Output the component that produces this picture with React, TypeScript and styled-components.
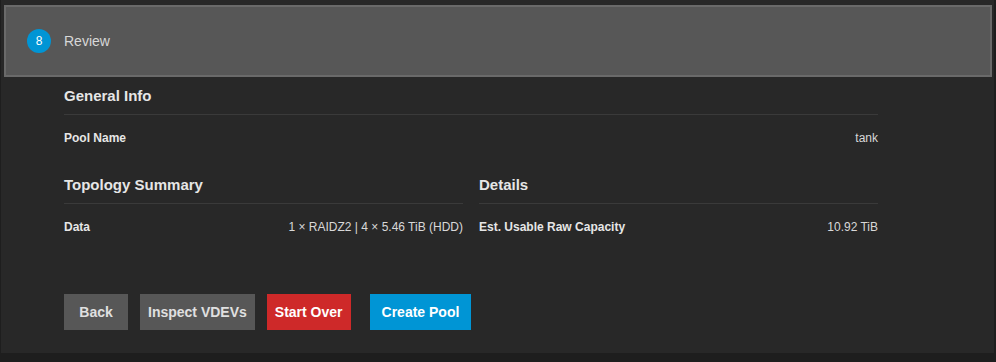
import React from "react";
import styled, { createGlobalStyle } from "styled-components";

const GlobalStyle = createGlobalStyle`
  html, body {
    margin: 0;
    padding: 0;
    background: #1e1e1e;
    font-family: "Liberation Sans", Arial, sans-serif;
  }
`;

const App: React.FC = () => {
  return (
    <>
      <GlobalStyle />
      <Card>
        <StepHeader>
          <StepBadge>8</StepBadge>
          <StepLabel>Review</StepLabel>
        </StepHeader>
        <Body>
          <Section>
            <SectionTitle>General Info</SectionTitle>
            <Row>
              <RowLabel>Pool Name</RowLabel>
              <RowValue>tank</RowValue>
            </Row>
          </Section>
          <Columns>
            <Section>
              <SectionTitle>Topology Summary</SectionTitle>
              <Row>
                <RowLabel>Data</RowLabel>
                <RowValue>1 × RAIDZ2 | 4 × 5.46 TiB (HDD)</RowValue>
              </Row>
            </Section>
            <Section>
              <SectionTitle>Details</SectionTitle>
              <Row>
                <RowLabel>Est. Usable Raw Capacity</RowLabel>
                <RowValue>10.92 TiB</RowValue>
              </Row>
            </Section>
          </Columns>
          <Actions>
            <Button>Back</Button>
            <Button>Inspect VDEVs</Button>
            <Button variant="danger">Start Over</Button>
            <PrimaryButton variant="primary">Create Pool</PrimaryButton>
          </Actions>
        </Body>
      </Card>
    </>
  );
};

export default App;

const Card = styled.div`
  width: 993px;
  height: 353px;
  box-sizing: border-box;
  margin-left: 1px;
  padding: 5px 2px 0 3px;
  background: #282828;
`;

const StepHeader = styled.div`
  height: 72px;
  box-sizing: border-box;
  display: flex;
  align-items: center;
  gap: 13px;
  padding-left: 21px;
  background: #575757;
  border: 2px solid #6a6a6a;
`;

const StepBadge = styled.div`
  width: 24px;
  height: 24px;
  border-radius: 50%;
  background: #0095d5;
  color: #ffffff;
  font-size: 12px;
  display: flex;
  align-items: center;
  justify-content: center;
`;

const StepLabel = styled.span`
  color: #d8d8d8;
  font-size: 14px;
`;

const Body = styled.div`
  padding: 8px 114px 0 60px;
`;

const Section = styled.div`
  display: flex;
  flex-direction: column;
`;

const SectionTitle = styled.div`
  color: #e6e6e6;
  font-size: 15px;
  font-weight: 700;
  line-height: 22px;
  padding-bottom: 7px;
  border-bottom: 1px solid #3a3a3a;
`;

const Row = styled.div`
  display: flex;
  justify-content: space-between;
  align-items: center;
  height: 46px;
  font-size: 12px;
`;

const RowLabel = styled.span`
  color: #e6e6e6;
  font-weight: 700;
`;

const RowValue = styled.span`
  color: #d8d8d8;
`;

const Columns = styled.div`
  display: grid;
  grid-template-columns: 1fr 1fr;
  gap: 16px;
  margin-top: 13px;
`;

const Actions = styled.div`
  display: flex;
  gap: 12px;
  margin-top: 44px;
`;

const Button = styled.button<{ variant?: "default" | "danger" | "primary" }>`
  height: 36px;
  min-width: 64px;
  padding: 0 8px;
  border: none;
  font-family: inherit;
  font-size: 14px;
  font-weight: 700;
  color: ${(p) => (p.variant ? "#ffffff" : "#e0e0e0")};
  background: ${(p) =>
    p.variant === "danger"
      ? "#ce2929"
      : p.variant === "primary"
      ? "#0095d5"
      : "#575757"};
  cursor: pointer;
`;

const PrimaryButton = styled(Button)`
  margin-left: 7px;
  padding: 0 12px;
`;
